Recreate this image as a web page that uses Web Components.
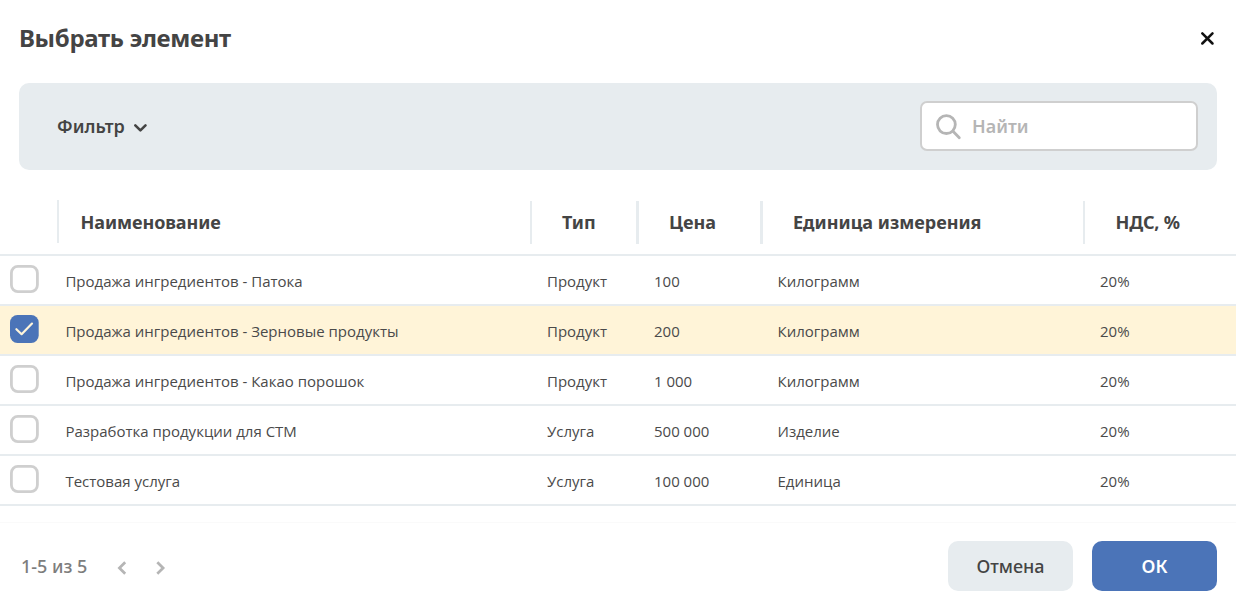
<!DOCTYPE html>
<html lang="ru">
<head>
<meta charset="utf-8">
<title>Выбрать элемент</title>
<style>
html,body{margin:0;height:100%;background:#fff;overflow:hidden}
body{font-family:"Noto Sans","Open Sans",sans-serif;color:#444}
</style>
</head>
<body>
<item-picker></item-picker>
<script>
const define = (name, html, setup) => {
  const tpl = document.createElement('template');
  tpl.innerHTML = html;
  customElements.define(name, class extends HTMLElement {
    constructor() {
      super();
      this.attachShadow({mode: 'open'}).appendChild(tpl.content.cloneNode(true));
    }
    connectedCallback() { if (setup) setup(this, this.shadowRoot); }
  });
};

define('check-box', `
<style>
:host{display:block;width:29px;height:28px}
svg{display:block}
.on{display:none}
:host([checked]) .on{display:block}
:host([checked]) .off{display:none}
</style>
<svg class="off" width="29" height="28"><rect x="1.4" y="1.4" width="26" height="25.2" rx="6.5" fill="#fff" stroke="#cfcfcf" stroke-width="2.8"/></svg>
<svg class="on" width="29" height="28"><rect width="28.7" height="28" rx="7.5" fill="#4b74b8"/><path d="M6.4 14.2l5.2 5L22 8.6" fill="none" stroke="#fff5da" stroke-width="2.2" stroke-linecap="round" stroke-linejoin="round"/></svg>
`);

define('dialog-header', `
<style>
:host{display:flex;align-items:center;justify-content:space-between;height:77px;padding:0 21px 0 19px;box-sizing:border-box}
h1{margin:0 0 2px;font-size:24px;line-height:34px;font-weight:700;letter-spacing:-.32px}
svg{display:block}
</style>
<h1><slot></slot></h1>
<svg width="15" height="15"><path d="M2.3 2.3l10.2 10.2M12.5 2.3L2.3 12.5" stroke="#111" stroke-width="2.5" stroke-linecap="round"/></svg>
`);

define('search-field', `
<style>
:host{display:flex;align-items:center;width:278px;height:50px;margin-bottom:1px;box-sizing:border-box;border:2px solid #cfcfcf;border-radius:7px;background:#fff;padding-left:13px;gap:10px;color:#b5b5b5;font-size:18px;font-weight:580}
svg{margin-top:1px}
</style>
<svg width="27" height="27"><circle cx="11.4" cy="11.6" r="8.9" fill="none" stroke="currentColor" stroke-width="2.8"/><path d="M18 18.3l6.3 6.5" stroke="currentColor" stroke-width="2.8" stroke-linecap="round"/></svg>
<span><slot></slot></span>
`);

define('filter-bar', `
<style>
:host{display:flex;align-items:center;justify-content:space-between;margin:6px 19px 0;height:87px;box-sizing:border-box;padding:0 19px 0 38px;border-radius:10px;background:#e7ecef}
.f{display:flex;align-items:center;gap:8px;font-size:18px;font-weight:580;margin-bottom:1px}
svg{display:block;margin-top:4px}
</style>
<div class="f"><span>Фильтр</span><svg width="15" height="10"><path d="M2.3 2.3l5.1 5.1 5.1-5.1" fill="none" stroke="#444" stroke-width="2.6" stroke-linecap="round" stroke-linejoin="round"/></svg></div>
<search-field>Найти</search-field>
`);

define('table-head', `
<style>
:host{display:grid;grid-template-columns:57px 473px 106px 124px 323px 1fr;height:86px;box-sizing:border-box;padding-top:31px;border-bottom:2px solid #e7ecef;font-size:18px;font-weight:700;line-height:43px}
div{height:43px;box-sizing:border-box;border-left:2px solid #e7ecef;padding-left:30px;white-space:nowrap}
.none{border:0}
.name{padding-left:21.5px;margin-top:-1px;line-height:45px;letter-spacing:-.08px}
.wide{border-left-width:3px;padding-left:30px}
.last{letter-spacing:-.2px;padding-left:30.5px}
</style>
<div class="none"></div><div class="name">Наименование</div><div>Тип</div><div class="wide">Цена</div><div class="wide">Единица измерения</div><div class="last">НДС, %</div>
`);

define('table-row', `
<style>
:host{display:grid;grid-template-columns:65.4px 481.6px 107px 123.5px 322.5px 1fr;height:50px;box-sizing:border-box;border-bottom:2px solid #e7ecef;font-family:"Open Sans","Noto Sans",sans-serif;font-size:15px;line-height:50px;white-space:nowrap;color:#4a4a4a}
:host([selected]){background:#fff4d8}
check-box{margin:9px 0 0 10px}
</style>
<check-box></check-box>
`, (host, root) => {
  root.querySelector('check-box').toggleAttribute('checked', host.hasAttribute('selected'));
  for (const text of host.getAttribute('cells').split('|')) {
    const cell = document.createElement('span');
    cell.textContent = text;
    root.appendChild(cell);
  }
});

define('page-nav', `
<style>
:host{display:flex;align-items:center;font-size:18px;font-weight:550;color:#7d7d7d}
svg{display:block;margin-top:3px}
.p{margin-left:30px}.n{margin-left:29px}
path{fill:none;stroke:#b5b5b5;stroke-width:2.7}
</style>
<span>1-5 из 5</span>
<svg class="p" width="10" height="14"><path d="M8.2 1.2L2.4 7l5.8 5.8"/></svg>
<svg class="n" width="10" height="14"><path d="M1.3 1.2L7.1 7l-5.8 5.8"/></svg>
`);

define('action-button', `
<style>
:host{display:flex;align-items:center;justify-content:center;width:125px;height:50px;border-radius:10px;background:#e7ecef;font-size:18px;font-weight:550}
:host([primary]){background:#4b74b8;color:#fff;font-weight:600}
</style>
<span><slot></slot></span>
`);

define('dialog-footer', `
<style>
:host{display:flex;align-items:center;height:92px;box-sizing:border-box;margin-top:16px;padding:0 19px 5px 21px;border-top:1px solid #fafafa}
page-nav{flex:1}
.b{display:flex;gap:19px}
</style>
<page-nav></page-nav>
<div class="b"><action-button>Отмена</action-button><action-button primary>ОК</action-button></div>
`);

define('item-picker', `
<style>:host{display:block;height:614px}</style>
<dialog-header>Выбрать элемент</dialog-header>
<filter-bar></filter-bar>
<table-head></table-head>
<table-row cells="Продажа ингредиентов - Патока|Продукт|100|Килограмм|20%"></table-row>
<table-row selected cells="Продажа ингредиентов - Зерновые продукты|Продукт|200|Килограмм|20%"></table-row>
<table-row cells="Продажа ингредиентов - Какао порошок|Продукт|1 000|Килограмм|20%"></table-row>
<table-row cells="Разработка продукции для СТМ|Услуга|500 000|Изделие|20%"></table-row>
<table-row cells="Тестовая услуга|Услуга|100 000|Единица|20%"></table-row>
<dialog-footer></dialog-footer>
`);
</script>
</body>
</html>
